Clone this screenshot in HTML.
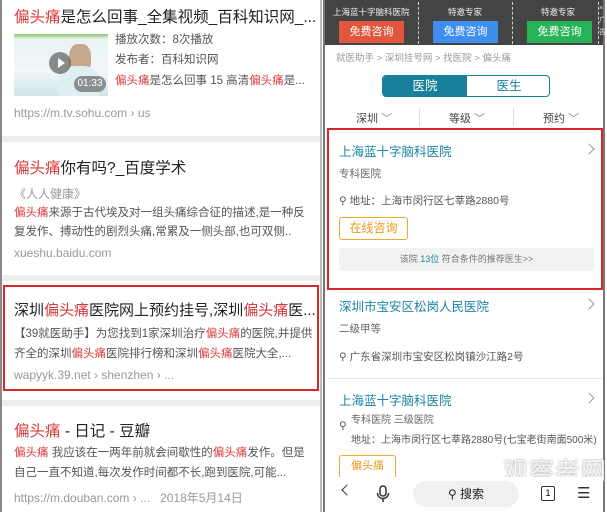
<!DOCTYPE html>
<html><head><meta charset="utf-8"><style>
*{margin:0;padding:0;box-sizing:border-box}
body{width:607px;height:512px;background:#fff;position:relative;overflow:hidden;font-family:"Liberation Sans","Noto Sans CJK SC",sans-serif}
.a{position:absolute;white-space:nowrap}
.r{color:#d93a3a}
.t{font-size:15.5px;color:#222}
.d{font-size:11.5px;color:#555}
.u{font-size:12px;color:#999}
.sep{position:absolute;left:2px;width:318px;background:#eee}
.hn{font-size:12.5px;color:#1b86a6}
.g{font-size:10.5px;color:#666}
.cv{position:absolute;width:8px;height:8px;border-top:1.5px solid #999;border-right:1.5px solid #999;transform:rotate(45deg)}
</style></head><body>
<div class="a" style="left:0;top:0;width:2px;height:512px;background:#888"></div>
<div class="a" style="left:320px;top:0;width:2px;height:512px;background:#bbb"></div>
<div class="a" style="left:323px;top:0;width:2px;height:512px;background:#777"></div>
<div class="a" style="left:603px;top:0;width:2px;height:512px;background:#777"></div>

<!-- left -->
<div class="a t" style="left:14px;top:5px"><span class="r">偏头痛</span>是怎么回事_全集视频_百科知识网_...</div>
<div class="a" style="left:14px;top:34px;width:94px;height:62px;background:linear-gradient(180deg,#8cc56a 0,#e8f4f4 8%,#f2f7f8 60%,#cfe5ea 100%);overflow:hidden">
 <div class="a" style="left:55px;top:10px;width:22px;height:30px;background:#c9a98c;border-radius:40%"></div>
 <div class="a" style="left:45px;top:32px;width:40px;height:30px;background:#dfeef0;border-radius:40% 40% 0 0"></div>
 <div class="a" style="left:35px;top:18px;width:22px;height:22px;border-radius:50%;background:rgba(80,80,80,.65)"></div>
 <div class="a" style="left:44px;top:24px;border-left:7px solid #fff;border-top:5px solid transparent;border-bottom:5px solid transparent"></div>
 <div class="a" style="left:60px;top:42px;width:32px;height:16px;border-radius:8px;background:rgba(80,80,80,.6);color:#fff;font-size:10px;text-align:center;line-height:16px">01:33</div>
</div>
<div class="a d" style="left:115px;top:31px">播放次数：8次播放</div>
<div class="a d" style="left:115px;top:51px">发布者：百科知识网</div>
<div class="a d" style="left:115px;top:72px"><span class="r">偏头痛</span>是怎么回事 15 高清<span class="r">偏头痛</span>是...</div>
<div class="a u" style="left:14px;top:106px">https://m.tv.sohu.com › us</div>
<div class="sep" style="top:136px;height:6px"></div>
<div class="a t" style="left:14px;top:156px"><span class="r">偏头痛</span>你有吗?_百度学术</div>
<div class="a u" style="left:14px;top:185px">《人人健康》</div>
<div class="a d" style="left:14px;top:204px"><span class="r">偏头痛</span>来源于古代埃及对一组头痛综合征的描述,是一种反</div>
<div class="a d" style="left:14px;top:223px">复发作、搏动性的剧烈头痛,常累及一侧头部,也可双侧..</div>
<div class="a u" style="left:14px;top:246px">xueshu.baidu.com</div>
<div class="sep" style="top:275px;height:6px"></div>
<div class="a" style="left:3px;top:285px;width:316px;height:106px;border:2px solid #d9262b"></div>
<div class="a t" style="left:14px;top:299px;font-size:15px">深圳<span class="r">偏头痛</span>医院网上预约挂号,深圳<span class="r">偏头痛</span>医...</div>
<div class="a d" style="left:14px;top:325px">【39就医助手】为您找到1家深圳治疗<span class="r">偏头痛</span>的医院,并提供</div>
<div class="a d" style="left:14px;top:345px">齐全的深圳<span class="r">偏头痛</span>医院排行榜和深圳<span class="r">偏头痛</span>医院大全,...</div>
<div class="a u" style="left:14px;top:368px">wapyyk.39.net › shenzhen › ...</div>
<div class="sep" style="top:400px;height:6px"></div>
<div class="a t" style="left:14px;top:419px"><span class="r">偏头痛</span> - 日记 - 豆瓣</div>
<div class="a d" style="left:14px;top:444px"><span class="r">偏头痛</span> 我应该在一两年前就会间歇性的<span class="r">偏头痛</span>发作。但是</div>
<div class="a d" style="left:14px;top:464px">自己一直不知道,每次发作时间都不长,跑到医院,可能...</div>
<div class="a u" style="left:14px;top:489px">https://m.douban.com › ...&nbsp;&nbsp; 2018年5月14日</div>

<!-- right -->
<div class="a" style="left:325px;top:0;width:278px;height:45px;background:#444"></div>
<div class="a" style="left:418px;top:2px;height:42px;border-left:1px dashed #ccc"></div>
<div class="a" style="left:512px;top:2px;height:42px;border-left:1px dashed #ccc"></div>
<div class="a" style="left:598px;top:2px;height:42px;border-left:1px dashed #ccc"></div>
<div class="a" style="left:333px;top:6px;font-size:8.5px;color:#eee">上海蓝十字脑科医院</div>
<div class="a" style="left:448px;top:6px;font-size:8.5px;color:#eee">特邀专家</div>
<div class="a" style="left:541px;top:6px;font-size:8.5px;color:#eee">特邀专家</div>
<div class="a" style="left:339px;top:21px;width:65px;height:22px;background:#e0573e;color:#fff;font-size:11px;text-align:center;line-height:22px">免费咨询</div>
<div class="a" style="left:433px;top:21px;width:65px;height:22px;background:#3e8ef0;color:#fff;font-size:11px;text-align:center;line-height:22px">免费咨询</div>
<div class="a" style="left:527px;top:21px;width:65px;height:22px;background:#28b25a;color:#fff;font-size:11px;text-align:center;line-height:22px">免费咨询</div>
<div class="a" style="left:599px;top:3px;font-size:7px;color:#ddd;line-height:12px">×<br>广<br>告</div>
<div class="a" style="left:336px;top:50px;font-size:9.5px;color:#999">就医助手 &gt; 深圳挂号网 &gt; 找医院 &gt; 偏头痛</div>
<div class="a" style="left:382px;top:75px;width:168px;height:22px;border:1px solid #1a7f9a;border-radius:4px;overflow:hidden">
 <div class="a" style="left:0;top:0;width:84px;height:22px;background:#1a7f9a;color:#fff;font-size:12.5px;text-align:center;line-height:21px">医院</div>
 <div class="a" style="left:84px;top:0;width:84px;height:22px;color:#1a7f9a;font-size:12.5px;text-align:center;line-height:21px">医生</div>
</div>
<div class="a" style="left:419px;top:108px;height:18px;border-left:1px solid #ddd"></div>
<div class="a" style="left:513px;top:108px;height:18px;border-left:1px solid #ddd"></div>
<div class="a g" style="left:356px;top:110px;color:#444;font-size:11px">深圳 <span style="color:#888">﹀</span></div>
<div class="a g" style="left:449px;top:110px;color:#444;font-size:11px">等级 <span style="color:#888">﹀</span></div>
<div class="a g" style="left:543px;top:110px;color:#444;font-size:11px">预约 <span style="color:#888">﹀</span></div>
<div class="a" style="left:327px;top:128px;width:276px;height:162px;border:2px solid #d9262b"></div>
<div class="a hn" style="left:339px;top:141px">上海蓝十字脑科医院</div>
<div class="cv" style="left:585px;top:145px"></div>
<div class="a g" style="left:339px;top:166px">专科医院</div>
<div class="a g" style="left:339px;top:193px;color:#555">⚲ 地址：上海市闵行区七莘路2880号</div>
<div class="a" style="left:339px;top:217px;width:69px;height:23px;border:1.5px solid #f0a830;border-radius:3px;color:#e89a1a;font-size:12px;text-align:center;line-height:20px">在线咨询</div>
<div class="a" style="left:339px;top:248px;width:255px;height:23px;background:#f2f2f2;border-radius:3px;font-size:9px;color:#777;text-align:center;line-height:23px">该院 <span style="color:#1b86a6">13位</span> 符合条件的推荐医生&gt;&gt;</div>
<div class="a hn" style="left:339px;top:296px">深圳市宝安区松岗人民医院</div>
<div class="cv" style="left:585px;top:300px"></div>
<div class="a g" style="left:339px;top:321px">二级甲等</div>
<div class="a g" style="left:339px;top:349px;color:#555">⚲ 广东省深圳市宝安区松岗镇沙江路2号</div>
<div class="a" style="left:327px;top:378px;width:276px;border-top:1px solid #e6e6e6"></div>
<div class="a hn" style="left:339px;top:390px">上海蓝十字脑科医院</div>
<div class="cv" style="left:585px;top:394px"></div>
<div class="a g" style="left:339px;top:420px;color:#555">⚲</div>
<div class="a g" style="left:351px;top:411px;font-size:10px">专科医院 三级医院</div>
<div class="a g" style="left:351px;top:431px;color:#555;font-size:10px">地址：上海市闵行区七莘路2880号(七宝老街南面500米)</div>
<div class="a" style="left:339px;top:455px;width:57px;height:22px;border:1.5px solid #f0a830;border-bottom:none;border-radius:3px 3px 0 0;color:#e89a1a;font-size:11px;text-align:center;line-height:20px">偏头痛</div>
<div class="a" style="left:503px;top:452px;font-size:25px;color:#f4f4f4;letter-spacing:1px;text-shadow:0 0 2px #999">观察者网</div>
<div class="a" style="left:505px;top:481px;font-size:9px;color:#eee;font-weight:bold;text-shadow:0 0 2px #888">www.guancha.cn</div>
<div class="a" style="left:326px;top:477px;width:277px;height:35px;background:#fff"></div>
<div class="a" style="left:343px;top:486px;width:8px;height:8px;border-left:1.5px solid #333;border-bottom:1.5px solid #333;transform:rotate(45deg)"></div>
<svg class="a" style="left:376px;top:485px" width="14" height="18" viewBox="0 0 14 18"><rect x="4" y="1" width="6" height="10" rx="3" fill="none" stroke="#333" stroke-width="1.5"/><path d="M1.5 8a5.5 5.5 0 0 0 11 0M7 13.5V17" fill="none" stroke="#333" stroke-width="1.5"/></svg>
<div class="a" style="left:413px;top:481px;width:106px;height:26px;border-radius:13px;background:#eef0f2;text-align:center;font-size:12px;color:#222;line-height:26px">⚲ 搜索</div>
<div class="a" style="left:541px;top:486px;width:14px;height:15px;border:1.5px solid #333;border-radius:2px;font-size:9px;text-align:center;line-height:12px">1</div>
<div class="a" style="left:577px;top:484px;font-size:15px;color:#333">☰</div>
</body></html>
